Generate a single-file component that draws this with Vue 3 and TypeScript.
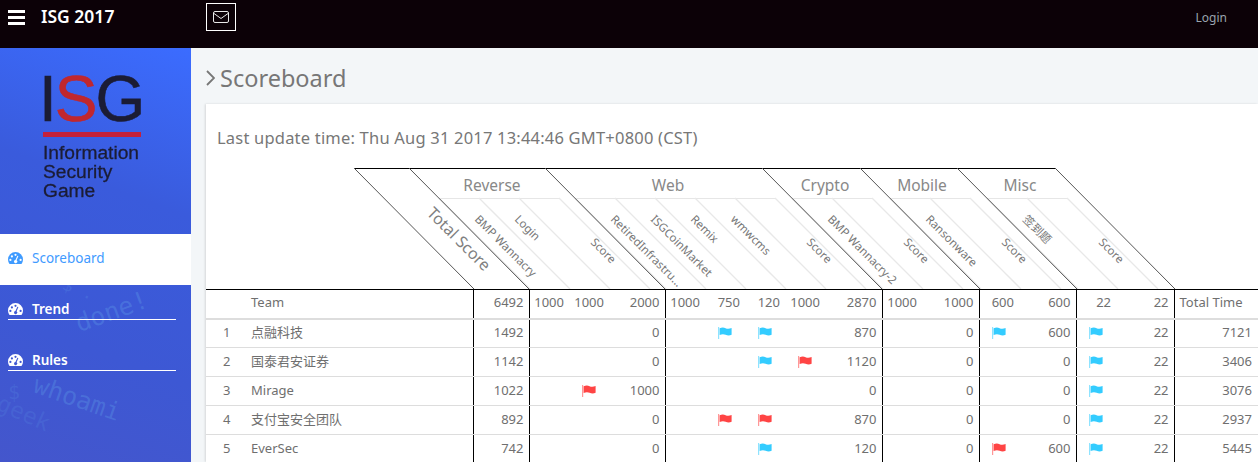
<script setup lang="ts">
interface Sub { label: string; score?: boolean; value: number }
interface Group { name: string; subs: Sub[] }

const groups: Group[] = [
  { name: 'Reverse', subs: [
    { label: 'BMP Wannacry', value: 1000 }, { label: 'Login', value: 1000 }, { label: 'Score', score: true, value: 2000 } ] },
  { name: 'Web', subs: [
    { label: 'RetiredInfrastru...', value: 1000 }, { label: 'ISGCoinMarket', value: 750 }, { label: 'Remix', value: 120 },
    { label: 'wmwcms', value: 1000 }, { label: 'Score', score: true, value: 2870 } ] },
  { name: 'Crypto', subs: [ { label: 'BMP Wannacry-2', value: 1000 }, { label: 'Score', score: true, value: 1000 } ] },
  { name: 'Mobile', subs: [ { label: 'Ransonware', value: 600 }, { label: 'Score', score: true, value: 600 } ] },
  { name: 'Misc', subs: [ { label: '签到题', value: 22 }, { label: 'Score', score: true, value: 22 } ] },
]

const SUB_W = 40
const groupCenters = [286, 462, 619, 716, 814]
const diagonals = [148, 203, 339, 556, 654, 751, 849]

interface Label { text: string; x: number; y: number }
const subLabels: Label[] = []
const lightLines: { x: number }[] = []
const lightTops: { x1: number; x2: number }[] = []
groups.forEach((g, gi) => {
  const d = diagonals[gi + 1]
  g.subs.forEach((s, si) => {
    lightLines.push({ x: d + 30 + si * SUB_W })
    if (s.score) {
      subLabels.push({ text: s.label, x: d + 120 + (si - 1) * SUB_W + 40 - 19, y: 75 })
    } else {
      subLabels.push({ text: s.label, x: d + 120 + si * SUB_W - 55, y: 52 })
    }
  })
  lightLines.push({ x: d + 30 + g.subs.length * SUB_W })
  lightTops.push({ x1: d + 30, x2: d + 30 + g.subs.length * SUB_W })
})

type F = 'b' | 'r' | null
interface Row { rank: number; team: string; total: number; cells: { flag: F; score?: number }[]; time: number }
const fl = (s: string): { flag: F }[] => s.split('').map(c => ({ flag: c === 'b' ? 'b' : c === 'r' ? 'r' : null }))
const sc = (n: number) => ({ flag: null as F, score: n })
const rows: Row[] = [
  { rank: 1, team: '点融科技', total: 1492, time: 7121, cells: [...fl('..'), sc(0), ...fl('.bb.'), sc(870), ...fl('.'), sc(0), ...fl('b'), sc(600), ...fl('b'), sc(22)] },
  { rank: 2, team: '国泰君安证券', total: 1142, time: 3406, cells: [...fl('..'), sc(0), ...fl('..br'), sc(1120), ...fl('.'), sc(0), ...fl('.'), sc(0), ...fl('b'), sc(22)] },
  { rank: 3, team: 'Mirage', total: 1022, time: 3076, cells: [...fl('.r'), sc(1000), ...fl('....'), sc(0), ...fl('.'), sc(0), ...fl('.'), sc(0), ...fl('b'), sc(22)] },
  { rank: 4, team: '支付宝安全团队', total: 892, time: 2937, cells: [...fl('..'), sc(0), ...fl('.rr.'), sc(870), ...fl('.'), sc(0), ...fl('.'), sc(0), ...fl('b'), sc(22)] },
  { rank: 5, team: 'EverSec', total: 742, time: 5445, cells: [...fl('..'), sc(0), ...fl('..b.'), sc(120), ...fl('.'), sc(0), ...fl('r'), sc(600), ...fl('b'), sc(22)] },
]

const columns = groups.flatMap((g, gi) => g.subs.map((s, si) => ({
  value: s.value,
  sep: si === 0,
  score: !!s.score,
  key: `${gi}-${si}`,
  wide: s.score ? (gi === 0 ? 56 : gi === 4 ? 58 : 57) : SUB_W,
})))

const gaugePath =
  'M7.5 1A7.5 7.5 0 0 0 0 8.5C0 10 .4 11.3 1.1 12.5a.9.9 0 0 0 .8.5H13.1a.9.9 0 0 0 .8-.5C14.6 11.3 15 10 15 8.5A7.5 7.5 0 0 0 7.5 1Z' +
  'M7.5 2.7a1.1 1.1 0 1 1 0 2.2a1.1 1.1 0 1 1 0-2.2Z' +
  'M3.9 4.3a1.1 1.1 0 1 1 0 2.2a1.1 1.1 0 1 1 0-2.2Z' +
  'M2.4 7.8a1.1 1.1 0 1 1 0 2.2a1.1 1.1 0 1 1 0-2.2Z' +
  'M12.6 7.8a1.1 1.1 0 1 1 0 2.2a1.1 1.1 0 1 1 0-2.2Z' +
  'M10.4 5.1L8.6 9.3a1.6 1.6 0 1 1-1.2-.3L9.4 4.8Z'
const nav = [
  { label: 'Scoreboard', active: true },
  { label: 'Trend', active: false },
  { label: 'Rules', active: false },
]
</script>

<template>
  <div class="page">
    <header class="topbar">
      <div class="burger"><i></i><i></i><i></i></div>
      <div class="brand">ISG 2017</div>
      <div class="mail">
        <svg width="16" height="12" viewBox="0 0 16 12" fill="none" stroke="#e8e8e8" stroke-width="1">
          <rect x=".5" y=".5" width="15" height="11" rx="1.5" />
          <path d="M1 2.5L8 7.5L15 2.5" />
        </svg>
      </div>
      <div class="login">Login</div>
    </header>

    <div class="body">
      <aside class="sidebar">
        <div class="texture" aria-hidden="true">
          <span class="tx done">done!</span>
          <span class="tx dollar">$ .</span>
          <span class="tx whoami">whoami</span>
          <span class="tx prompt">$</span>
          <span class="tx geek">geek</span>
        </div>
        <div class="logo">
          <div class="logo-mark">I<b>S</b>G</div>
          <div class="logo-bar"></div>
          <div class="logo-text">Information<br />Security<br />Game</div>
        </div>
        <nav class="nav">
          <a v-for="n in nav" :key="n.label" class="nav-item" :class="{ active: n.active }">
            <span class="nav-inner">
              <svg class="gauge" width="15" height="14" viewBox="0 0 15 14"><path :d="gaugePath" fill-rule="evenodd" fill="currentColor" /></svg>
              <span>{{ n.label }}</span>
            </span>
          </a>
        </nav>
      </aside>

      <main class="main">
        <h1 class="title">
          <svg width="9" height="16" viewBox="0 0 9 16" fill="none" stroke="#777" stroke-width="1.8"><path d="M1 1l7 7l-7 7" /></svg>
          <span>Scoreboard</span>
        </h1>
        <section class="card">
          <p class="updated">Last update time: Thu Aug 31 2017 13:44:46 GMT+0800 (CST)</p>
          <svg class="heads" width="1052" height="121" viewBox="0 0 1052 121">
            <line x1="148" y1=".5" x2="849" y2=".5" stroke="#000" />
            <line v-for="t in lightTops" :key="t.x1" :x1="t.x1" y1="30.5" :x2="t.x2" y2="30.5" stroke="#e6e6e6" />
            <line v-for="(l, i) in lightLines" :key="'l' + i" :x1="l.x" y1="30" :x2="l.x + 91" y2="121" stroke="#e8e8e8" stroke-width="1.3" />
            <line v-for="d in diagonals" :key="d" :x1="d" y1="0" :x2="d + 120" y2="121" stroke="#555" />
            <text v-for="(g, i) in groups" :key="g.name" class="g" :x="groupCenters[i]" y="23" text-anchor="middle">{{ g.name }}</text>
            <text class="tot" transform="translate(220 46) rotate(45)">Total Score</text>
            <text v-for="(s, i) in subLabels" :key="i" class="s" :transform="`translate(${s.x} ${s.y}) rotate(45)`">{{ s.text }}</text>
          </svg>
          <table class="board">
            <colgroup>
              <col style="width:45px" /><col style="width:222px" /><col style="width:56px" />
              <col v-for="c in columns" :key="c.key" :style="{ width: c.wide + 'px' }" />
              <col style="width:84px" />
            </colgroup>
            <thead>
              <tr>
                <th></th>
                <th class="left">Team</th>
                <th class="num sep">6492</th>
                <th v-for="c in columns" :key="c.key" class="num" :class="{ sep: c.sep }">{{ c.value }}</th>
                <th class="sep left tt">Total Time</th>
              </tr>
            </thead>
            <tbody>
              <tr v-for="r in rows" :key="r.rank">
                <td class="rank">{{ r.rank }}</td>
                <td class="left">{{ r.team }}</td>
                <td class="num sep">{{ r.total }}</td>
                <td v-for="(cell, i) in r.cells" :key="i" class="num" :class="{ sep: columns[i].sep, fc: !!cell.flag }">
                  <svg v-if="cell.flag" class="flag" :class="cell.flag" width="14" height="12" viewBox="0 0 14 12">
                    <rect x="0" y="0" width="1.2" height="12" fill="currentColor" opacity=".55" />
                    <path d="M1.6 1.2C4 .2 6 .4 7.6 1.2S11.4 2 13.6 1V7.8C11.4 8.8 9.4 8.6 7.6 7.8S4 7 1.6 8Z" fill="currentColor" />
                  </svg>
                  <template v-else-if="cell.score !== undefined">{{ cell.score }}</template>
                </td>
                <td class="num sep last">{{ r.time }}</td>
              </tr>
            </tbody>
          </table>
        </section>
      </main>
    </div>
  </div>
</template>

<style>
html, body { margin: 0; overflow: hidden; }
</style>

<style scoped>
.page {
  height: 462px;
  overflow: hidden;
  display: flex;
  flex-direction: column;
  font-family: "Noto Sans", "Noto Sans CJK SC", sans-serif;
  color: #777;
}
.topbar {
  height: 48px;
  flex: none;
  background: #0c0107;
  display: flex;
  align-items: flex-start;
  color: #fff;
}
.burger {
  width: 17px;
  margin: 10px 0 0 8px;
  display: flex;
  flex-direction: column;
  gap: 3px;
}
.burger i { display: block; height: 3px; background: #fff; }
.brand {
  margin: 3px 0 0 16px;
  font-size: 17.5px;
  line-height: 26px;
  font-weight: 600;
  width: 165px;
}
.mail {
  width: 28px;
  height: 26px;
  border: 1px solid #fff;
  margin-top: 3px;
  display: flex;
  align-items: center;
  justify-content: center;
}
.login {
  margin: 9px 31px 0 auto;
  font-size: 12px;
  line-height: 17px;
  color: #9aa4ae;
}
.body { flex: 1; display: flex; min-height: 0; }
.sidebar {
  position: relative;
  width: 191px;
  flex: none;
  overflow: hidden;
  background: linear-gradient(200deg, #3b6cff 0%, #3a5bdc 35%, #3d58d4 70%, #4456cc 100%);
}
.texture { position: absolute; inset: 0; pointer-events: none; }
.tx {
  position: absolute;
  font-family: "DejaVu Sans Mono", monospace;
  color: rgba(92, 150, 230, 0.38);
  font-size: 25px;
  line-height: 1;
  white-space: nowrap;
}
.done { left: 74px; top: 251px; transform: rotate(-20deg); }
.dollar { left: 62px; top: 232px; font-size: 18px; transform: rotate(20deg); color: rgba(92, 150, 230, 0.25); }
.whoami { left: 32px; top: 338px; transform: rotate(19deg); }
.prompt { left: 8px; top: 334px; font-size: 20px; color: rgba(92, 150, 230, 0.22); }
.geek { left: -4px; top: 354px; font-size: 23px; transform: rotate(24deg); color: rgba(92, 150, 230, 0.2); }
.logo {
  position: relative;
  height: 186px;
  box-sizing: border-box;
  padding: 20px 0 0 43px;
  font-family: "Liberation Sans", sans-serif;
  color: #1b1c34;
  filter: blur(.35px);
}
.logo-mark {
  font-size: 64px;
  line-height: 62px;
  letter-spacing: -2px;
  margin-left: -4px;
  -webkit-text-stroke: .6px currentColor;
}
.logo-mark b { font-weight: 400; color: #c1272d; }
.logo-bar { width: 98px; height: 5px; background: #c4213a; margin-top: 2px; }
.logo-text { font-size: 19.2px; line-height: 19px; margin-top: 6px; -webkit-text-stroke: .3px currentColor; }
.nav { position: relative; display: flex; flex-direction: column; }
.nav-item {
  height: 51px;
  padding: 12px 15px 0 8px;
  box-sizing: border-box;
  color: #fff;
  font-size: 13.5px;
  font-weight: 600;
}
.nav-inner {
  display: flex;
  align-items: center;
  gap: 9px;
  height: 20px;
  padding-top: 2px;
  border-bottom: 1px solid #fff;
}
.nav-item.active {
  background: #fff;
  color: #3f9bff;
  font-weight: 400;
  padding-top: 0;
}
.nav-item.active .nav-inner { border-bottom: none; height: 47px; padding-top: 0; }
.gauge { flex: none; }
.main { flex: 1; min-width: 0; background: #f3f6f8; display: flex; flex-direction: column; padding-left: 15px; }
.title {
  height: 56px;
  flex: none;
  margin: 0;
  padding-top: 4px;
  display: flex;
  align-items: center;
  gap: 5px;
  font-size: 23.5px;
  font-weight: 400;
  color: #777;
  box-sizing: border-box;
}
.card {
  flex: 1;
  background: #fff;
  box-shadow: -1px 0 2px rgba(0, 0, 0, .12);
  min-height: 0;
}
.updated {
  margin: 0;
  padding: 23px 0 0 11px;
  height: 41px;
  font-size: 16.5px;
  letter-spacing: .2px;
  line-height: 22px;
  color: #777;
}
.heads { display: block; }
.heads text { font-family: "Noto Sans", "Noto Sans CJK SC", sans-serif; }
.g { font-size: 15.5px; fill: #888; }
.tot { font-size: 16px; fill: #808080; }
.s { font-size: 11.5px; fill: #777; }
.board {
  width: 1052px;
  table-layout: fixed;
  border-collapse: collapse;
  font-size: 13px;
  color: #6f6f6f;
}
.board th, .board td {
  height: 29px;
  padding: 0 0 2px;
  font-weight: 400;
  line-height: 16px;
  border-bottom: 1px solid #ddd;
  box-sizing: border-box;
  white-space: nowrap;
}
.board th { border-top: 1px solid #000; border-bottom: 2px solid #ddd; padding-bottom: 3px; }
.board .left { text-align: left; }
.board .rank { text-align: left; padding-left: 17px; }
.board .num { text-align: right; padding-right: 5px; }
.board .tt { padding-left: 5px; }
.board .last { padding-right: 6px; }
.board .sep { border-left: 1px solid #000; }
.board .fc { text-align: center; padding-right: 0; }
.flag { display: inline-block; vertical-align: middle; margin-top: -2px; }
.flag.b { color: #33ccff; }
.flag.r { color: #ff4444; }
</style>
